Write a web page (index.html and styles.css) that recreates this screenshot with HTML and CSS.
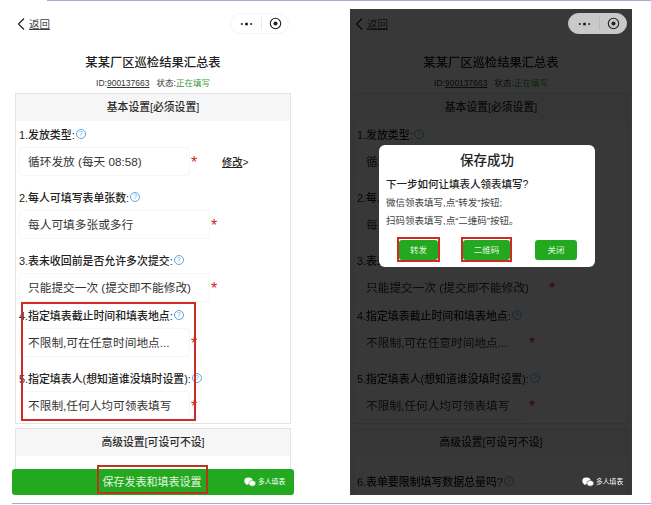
FILE: index.html
```html
<!DOCTYPE html>
<html lang="zh-CN">
    <head>
        <meta charset="UTF-8">
        <meta name="viewport" content="width=device-width, initial-scale=1.0">
        <title>保存发表和填表设置</title>
        <link rel="stylesheet" href="styles.css">
    </head>
    <body>
        <div class="rule rule-top"></div>
        <div class="screens">
            <!-- left phone: the form -->
            <div class="phone">
                <div class="nav">
                    <a class="back"><svg class="back-icon" viewBox="0 0 10 14"><path d="M8 1.5 2.5 7 8 12.5"/></svg><span>返回</span></a>
                    <div class="capsule">
                        <svg class="dots" viewBox="0 0 14 4"><circle cx="2" cy="2" r="1.1"/><circle cx="7" cy="2" r="1.7"/><circle cx="12" cy="2" r="1.1"/></svg>
                        <span class="capsule-line"></span>
                        <svg class="target" viewBox="0 0 14 14"><circle class="ring" cx="7" cy="7" r="5.6"/><circle cx="7" cy="7" r="2.2"/></svg>
                    </div>
                </div>
                <h1 class="title">某某厂区巡检结果汇总表</h1>
                <p class="meta">ID:<u>900137663</u>&nbsp;&nbsp; 状态:<span class="status">正在填写</span></p>
                <div class="card">
                    <h2 class="card-head">基本设置[必须设置]</h2>
                    <div class="card-body">
                        <div class="field">
                            <p class="label">1.发放类型:<i class="help">?</i></p>
                            <div class="row">
                                <div class="box box-short">循环发放 (每天 08:58)</div><b class="star">*</b>
                                <a class="edit"><u>修改</u>&gt;</a>
                            </div>
                        </div>
                        <div class="field">
                            <p class="label">2.每人可填写表单张数:<i class="help">?</i></p>
                            <div class="row"><div class="box">每人可填多张或多行</div><b class="star">*</b></div>
                        </div>
                        <div class="field field-tight">
                            <p class="label">3.表未收回前是否允许多次提交:<i class="help">?</i></p>
                            <div class="row"><div class="box">只能提交一次 (提交即不能修改)</div><b class="star">*</b></div>
                        </div>
                        <div class="field">
                            <p class="label">4.指定填表截止时间和填表地点:<i class="help">?</i></p>
                            <div class="row"><div class="box box-short">不限制,可在任意时间地点...</div><b class="star">*</b></div>
                        </div>
                        <div class="field">
                            <p class="label">5.指定填表人(想知道谁没填时设置):<i class="help">?</i></p>
                            <div class="row"><div class="box box-short">不限制,任何人均可领表填写</div><b class="star">*</b></div>
                        </div>
                    </div>
                </div>
                <div class="card">
                    <h2 class="card-head">高级设置[可设可不设]</h2>
                </div>
                <div class="mark mark-fields"></div>
                <div class="save-bar">
                    <span class="save-text">保存发表和填表设置</span>
                    <span class="brand"><svg class="wechat" viewBox="0 0 16 13"><ellipse cx="6" cy="5" rx="5.6" ry="4.6"/><path d="M3 8 2.4 10.6 5.6 9z"/><ellipse class="wechat-small" cx="11" cy="8.2" rx="4.6" ry="3.8"/></svg>多人填表</span>
                </div>
            </div>

            <!-- right phone: same form dimmed, with the dialog on top -->
            <div class="phone phone-dim">
                <div class="nav">
                    <a class="back"><svg class="back-icon" viewBox="0 0 10 14"><path d="M8 1.5 2.5 7 8 12.5"/></svg><span>返回</span></a>
                    <div class="capsule">
                        <svg class="dots" viewBox="0 0 14 4"><circle cx="2" cy="2" r="1.1"/><circle cx="7" cy="2" r="1.7"/><circle cx="12" cy="2" r="1.1"/></svg>
                        <span class="capsule-line"></span>
                        <svg class="target" viewBox="0 0 14 14"><circle class="ring" cx="7" cy="7" r="5.6"/><circle cx="7" cy="7" r="2.2"/></svg>
                    </div>
                </div>
                <h1 class="title">某某厂区巡检结果汇总表</h1>
                <p class="meta">ID:<u>900137663</u>&nbsp;&nbsp; 状态:<span class="status">正在填写</span></p>
                <div class="card">
                    <h2 class="card-head">基本设置[必须设置]</h2>
                    <div class="card-body">
                        <div class="field">
                            <p class="label">1.发放类型:<i class="help">?</i></p>
                            <div class="row">
                                <div class="box box-short">循环发放 (每天 08:58)</div><b class="star">*</b>
                                <a class="edit"><u>修改</u>&gt;</a>
                            </div>
                        </div>
                        <div class="field">
                            <p class="label">2.每人可填写表单张数:<i class="help">?</i></p>
                            <div class="row"><div class="box">每人可填多张或多行</div><b class="star">*</b></div>
                        </div>
                        <div class="field field-tight">
                            <p class="label">3.表未收回前是否允许多次提交:<i class="help">?</i></p>
                            <div class="row"><div class="box">只能提交一次 (提交即不能修改)</div><b class="star">*</b></div>
                        </div>
                        <div class="field">
                            <p class="label">4.指定填表截止时间和填表地点:<i class="help">?</i></p>
                            <div class="row"><div class="box box-short">不限制,可在任意时间地点...</div><b class="star">*</b></div>
                        </div>
                        <div class="field">
                            <p class="label">5.指定填表人(想知道谁没填时设置):<i class="help">?</i></p>
                            <div class="row"><div class="box box-short">不限制,任何人均可领表填写</div><b class="star">*</b></div>
                        </div>
                    </div>
                </div>
                <div class="card">
                    <h2 class="card-head">高级设置[可设可不设]</h2>
                    <div class="card-body">
                        <p class="label label-next">6.表单要限制填写数据总量吗?<i class="help">?</i></p>
                    </div>
                </div>
                <div class="shade"></div>
                <span class="brand brand-top"><svg class="wechat" viewBox="0 0 16 13"><ellipse cx="6" cy="5" rx="5.6" ry="4.6"/><path d="M3 8 2.4 10.6 5.6 9z"/><ellipse class="wechat-small" cx="11" cy="8.2" rx="4.6" ry="3.8"/></svg>多人填表</span>
                <div class="dialog">
                    <h3 class="dialog-title">保存成功</h3>
                    <p class="dialog-ask">下一步如何让填表人领表填写?</p>
                    <p class="dialog-line">微信领表填写,点“转发”按钮;</p>
                    <p class="dialog-line">扫码领表填写,点“二维码”按钮。</p>
                    <div class="dialog-btns">
                        <a class="btn btn-forward btn-marked">转发</a>
                        <a class="btn btn-qr btn-marked">二维码</a>
                        <a class="btn btn-close">关闭</a>
                    </div>
                </div>
            </div>
        </div>
        <div class="rule rule-bottom"></div>
    </body>
</html>
```

FILE: styles.css
```css
:root {
    --green: #22a91f;
    --red: #cf2a26;
    --line: #e4e4e4;
    --rule: #a3add3;
}

html, body {
    margin: 0;
    padding: 0;
    height: 505px;
    overflow: hidden;
    background: white;
}

body {
    font-family: "Liberation Sans", "Noto Sans CJK SC", sans-serif;
    color: #222;
    display: flex;
    flex-direction: column;
}

p, h1, h2, h3 {
    margin: 0;
    font-weight: normal;
}

.rule {
    height: 1px;
    background: var(--rule);
}

.rule-top {
    margin-left: 47px;
}

.rule-bottom {
    margin: 8px 0 0 12px;
}

/* the reference is a soft, scaled-up photo */
.screens {
    display: flex;
    gap: 56px;
    margin: 8px 0 0 12px;
    filter: blur(0.35px);
}

.phone {
    position: relative;
    width: 282px;
    height: 486px;
    overflow: hidden;
    flex: none;
    background: white;
}

/* nav bar */
.nav {
    display: flex;
    align-items: center;
    justify-content: space-between;
    height: 29px;
    padding: 0 5px 0 4px;
}

.back {
    display: flex;
    align-items: center;
    gap: 3px;
    font-size: 10.5px;
    color: #444;
    text-decoration: underline;
}

.back-icon {
    width: 10px;
    height: 14px;
    fill: none;
    stroke: #222;
    stroke-width: 1.2;
}

.capsule {
    position: relative;
    z-index: 3;
    display: flex;
    align-items: center;
    justify-content: space-between;
    box-sizing: border-box;
    width: 59px;
    height: 21px;
    padding: 0 6px 0 9px;
    border-radius: 11px;
    background: white;
    border: 1px solid #f4f4f4;
}

.phone-dim .capsule {
    background: #c9c9c9;
    border-color: #c9c9c9;
}

.dots {
    width: 13px;
    height: 4px;
    fill: #222;
}

.capsule-line {
    width: 1px;
    height: 13px;
    background: #eaeaea;
}

.phone-dim .capsule-line {
    background: #b8b8b8;
}

.target {
    width: 13px;
    height: 13px;
    fill: #222;
}

.target .ring {
    fill: none;
    stroke: #222;
    stroke-width: 1.2;
}

/* heading */
.title {
    margin-top: 16px;
    text-align: center;
    font-size: 12.3px;
    line-height: 18px;
    font-weight: 500;
    color: #222;
}

.meta {
    margin-top: 5px;
    text-align: center;
    font-size: 8.5px;
    line-height: 12px;
    color: #333;
}

.status {
    color: #3c9a3c;
}

/* cards */
.card {
    margin: 4px 3px 0;
    border: 1px solid var(--line);
}

.card + .card {
    margin-top: 4px;
    height: 200px;
}

.card-head {
    height: 27px;
    background: #f6f6f6;
    text-align: center;
    font-size: 10.8px;
    line-height: 27px;
    font-weight: 500;
    color: #2a2a2a;
}

.card-body {
    padding: 5px 3px 3px;
}

.field {
    margin-bottom: 13px;
}

.field-tight {
    margin-bottom: 5px;
}

.field:last-child {
    margin-bottom: 0;
}

.label {
    display: flex;
    align-items: center;
    height: 16px;
    font-size: 10.9px;
    font-weight: 500;
    color: #222;
    white-space: nowrap;
}

.label-next {
    margin-top: 12px;
}

.help {
    display: inline-block;
    box-sizing: border-box;
    width: 10px;
    height: 10px;
    margin-left: 1px;
    border: 1px solid #59a8d8;
    border-radius: 50%;
    font-size: 7px;
    font-style: normal;
    font-weight: normal;
    line-height: 8px;
    text-align: center;
    color: #59a8d8;
}

.row {
    position: relative;
    display: flex;
    align-items: center;
    margin-top: 5px;
}

.box {
    box-sizing: border-box;
    width: 191px;
    height: 29px;
    padding-left: 8px;
    border: 1px solid #f6f6f6;
    border-radius: 3px;
    font-size: 11.7px;
    line-height: 28px;
    color: #333;
    white-space: nowrap;
}

.box-short {
    width: 171px;
}

.star {
    width: 8px;
    margin-top: 2px;
    text-align: center;
    font-size: 16px;
    line-height: 14px;
    font-weight: normal;
    color: var(--red);
}

.edit {
    margin-left: 24px;
    font-size: 10.2px;
    font-weight: 500;
    color: #222;
}

/* annotations */
.mark {
    position: absolute;
    box-sizing: border-box;
    border: 2px solid var(--red);
}

.mark-fields {
    left: 9px;
    top: 293px;
    width: 175px;
    height: 119px;
}

.save-bar {
    position: absolute;
    left: 0;
    right: 0;
    top: 460px;
    height: 26px;
    border-radius: 3px;
    background: var(--green);
    display: flex;
    align-items: center;
    justify-content: center;
    color: #e6f5e2;
    font-size: 11px;
}

.save-text {
    box-sizing: border-box;
    width: 111px;
    height: 29px;
    margin-top: -6px;
    border: 2px solid #b8371c;
    text-align: center;
    line-height: 31px;
    position: relative;
    left: -1px;
}

.brand {
    position: absolute;
    left: 232px;
    top: 6px;
    display: flex;
    align-items: center;
    gap: 2px;
    font-size: 6.8px;
    line-height: 14px;
    color: white;
}

.wechat {
    width: 12px;
    height: 10px;
    fill: white;
}

.wechat-small {
    stroke: var(--green);
    stroke-width: 0.7;
}

/* right phone overlay */
.shade {
    position: absolute;
    inset: 0;
    z-index: 1;
    background: rgba(0, 0, 0, 0.78);
}

.brand-top {
    z-index: 2;
    top: 466px;
}

.brand-top .wechat-small {
    stroke: #333;
}

.dialog {
    position: absolute;
    z-index: 3;
    left: 29px;
    top: 136px;
    box-sizing: border-box;
    width: 216px;
    height: 122px;
    padding: 6px 7px 0;
    border-radius: 6px;
    background: white;
}

.dialog-title {
    text-align: center;
    font-size: 13.5px;
    line-height: 20px;
    font-weight: 500;
    color: #222;
}

.dialog-ask {
    margin-top: 6px;
    font-size: 10.5px;
    line-height: 15px;
    font-weight: 500;
    color: #222;
    white-space: nowrap;
}

.dialog-line {
    margin-top: 4px;
    font-size: 9.5px;
    line-height: 14px;
    color: #444;
    white-space: nowrap;
}

.dialog-btns {
    display: flex;
    margin-top: 12px;
    padding-left: 13px;
}

.btn {
    height: 20px;
    border-radius: 3px;
    background: var(--green);
    text-align: center;
    font-size: 8.5px;
    line-height: 20px;
    color: #e6f5e2;
}

.btn-marked {
    position: relative;
}

/* square red frame drawn round the button */
.btn-marked::after {
    content: "";
    position: absolute;
    inset: -3px -2px -2px;
    border: 2px solid var(--red);
}

.btn-forward {
    width: 39px;
}

.btn-qr {
    width: 47px;
    margin-left: 25px;
}

.btn-close {
    width: 42px;
    margin-left: 25px;
}
```
